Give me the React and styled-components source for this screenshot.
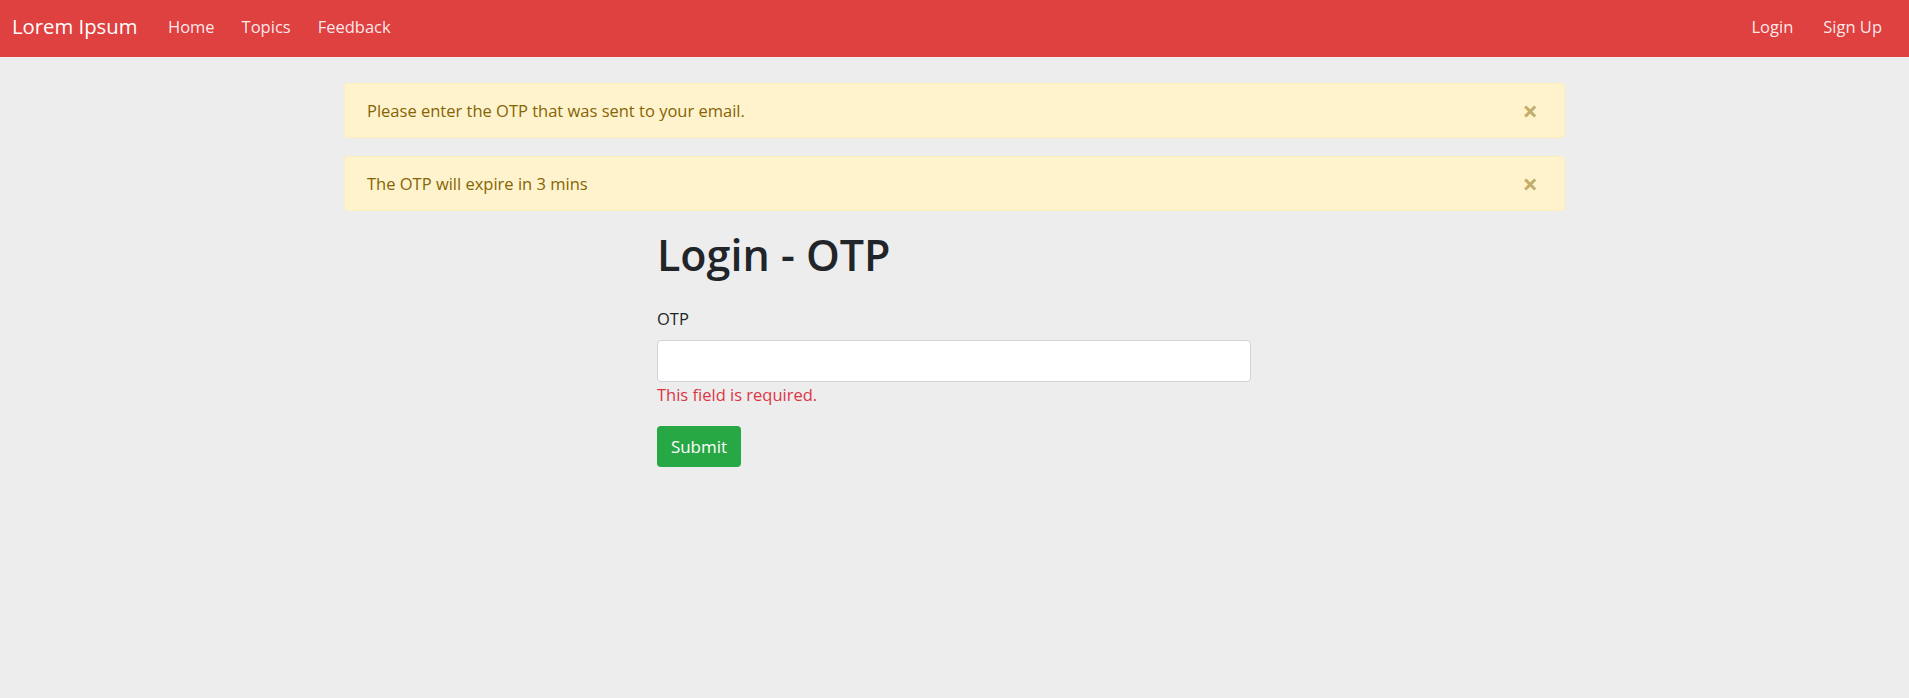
import React from 'react'
import styled, { createGlobalStyle } from 'styled-components'

const GlobalStyle = createGlobalStyle`
  * { box-sizing: border-box; }
  body {
    margin: 0;
    background: #ededed;
    font-family: "Open Sans", "Noto Sans", sans-serif;
    color: #212529;
  }
`

const Nav = styled.nav`
  height: 57px;
  background: #df4040;
  display: flex;
  align-items: center;
  justify-content: space-between;
  padding: 0 12px 5px 12px;
`
const Links = styled.div`
  display: flex;
  align-items: center;
`
const Brand = styled.span`
  color: #fff;
  font-size: 20.3px;
  margin-right: 17px;
`
const NavLink = styled.a`
  color: rgba(255, 255, 255, 0.9);
  font-size: 16.5px;
  padding: 0 ${p => (p.$wide ? 15 : 13.5)}px;
  cursor: pointer;
`
const Container = styled.div`
  width: 1221px;
  margin: 26px auto 0;
`
const Alert = styled.div`
  height: 55px;
  display: flex;
  align-items: center;
  justify-content: space-between;
  padding: 0 26px 0 22px;
  margin-bottom: 18px;
  background: #fff3cd;
  border: 1px solid #ffeeba;
  border-radius: 4px;
  color: #856404;
  font-size: 16.5px;
`
const Close = styled.span`
  color: #c4ad6b;
  font-size: 27px;
  font-weight: 700;
  line-height: 1;
  cursor: pointer;
`
const Form = styled.form`
  width: 594px;
  margin-left: 313px;
`
const Title = styled.h1`
  margin: 0 0 26px;
  font-size: 43px;
  font-weight: 600;
  line-height: 52px;
`
const Label = styled.label`
  display: block;
  font-size: 16.5px;
  line-height: 24px;
  margin-bottom: 9px;
`
const Input = styled.input`
  display: block;
  width: 100%;
  height: 42px;
  background: #fff;
  border: 1px solid #ced4da;
  border-radius: 4px;
`
const Error = styled.div`
  color: #dc3545;
  font-size: 16.5px;
  line-height: 22px;
  margin-top: 2px;
`
const Button = styled.button`
  margin-top: 20px;
  width: 84px;
  height: 41px;
  background: #28a745;
  color: #fff;
  border: none;
  border-radius: 4px;
  font-family: inherit;
  font-size: 17px;
  cursor: pointer;
`

export default function App() {
  return (
    <>
      <GlobalStyle />
      <Nav>
        <Links>
          <Brand>Lorem Ipsum</Brand>
          <NavLink>Home</NavLink>
          <NavLink>Topics</NavLink>
          <NavLink>Feedback</NavLink>
        </Links>
        <Links>
          <NavLink $wide>Login</NavLink>
          <NavLink $wide>Sign Up</NavLink>
        </Links>
      </Nav>
      <Container>
        <Alert>
          Please enter the OTP that was sent to your email.
          <Close>×</Close>
        </Alert>
        <Alert>
          The OTP will expire in 3 mins
          <Close>×</Close>
        </Alert>
        <Form>
          <Title>Login - OTP</Title>
          <Label>OTP</Label>
          <Input />
          <Error>This field is required.</Error>
          <Button type="button">Submit</Button>
        </Form>
      </Container>
    </>
  )
}
